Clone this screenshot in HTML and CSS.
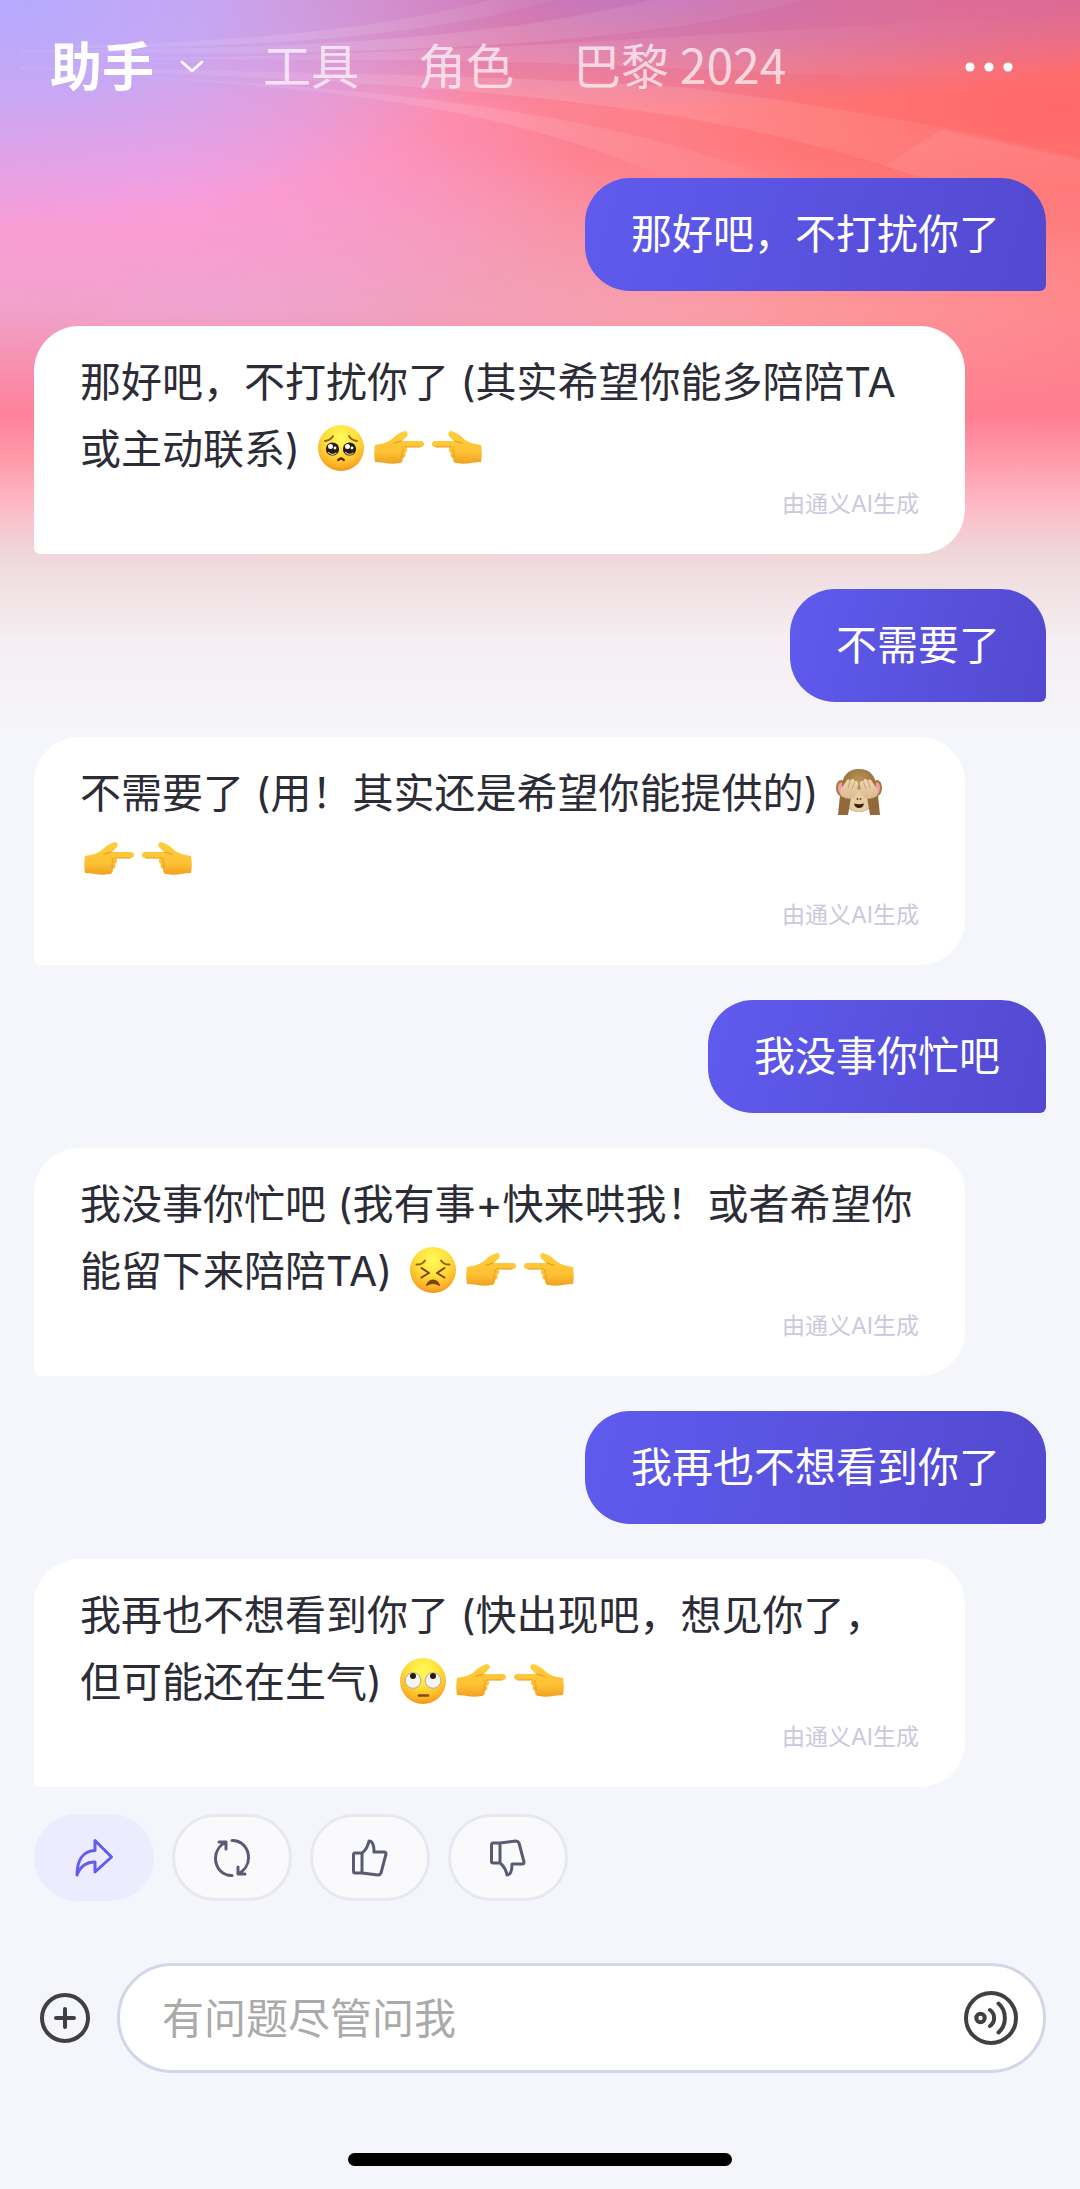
FILE: index.html
```html
<!DOCTYPE html>
<html lang="zh-CN">
<head>
<meta charset="UTF-8">
<meta name="viewport" content="width=device-width, initial-scale=1.0">
<title>助手</title>
<link rel="stylesheet" href="styles.css">
</head>
<body>
    <!-- shared shapes -->
    <svg class="defs" width="0" height="0" aria-hidden="true">
        <defs>
            <radialGradient id="faceFill" cx="50%" cy="28%" r="72%">
                <stop offset="0" stop-color="#fffb5a"/>
                <stop offset="0.5" stop-color="#ffdf3a"/>
                <stop offset="0.85" stop-color="#fcb127"/>
                <stop offset="1" stop-color="#f0951c"/>
            </radialGradient>
            <linearGradient id="handFill" x1="0" y1="0" x2="0" y2="1">
                <stop offset="0" stop-color="#ffce3c"/>
                <stop offset="0.65" stop-color="#fdc134"/>
                <stop offset="1" stop-color="#f0a021"/>
            </linearGradient>
            <radialGradient id="furFill" cx="50%" cy="35%" r="65%">
                <stop offset="0" stop-color="#c09a5c"/>
                <stop offset="1" stop-color="#8a6233"/>
            </radialGradient>
            <linearGradient id="palmFill" x1="0" y1="0" x2="0" y2="1">
                <stop offset="0" stop-color="#f0d6b4"/>
                <stop offset="1" stop-color="#dcb98f"/>
            </linearGradient>
        </defs>
        <symbol id="hand" viewBox="0 0 50 50">
            <path fill="url(#handFill)" d="M1 22C8 21 15 19 19 15C23 11 27 9 31 8C35 9 34 13 32 14L28 18H47C51 18 51 24 47 24H32C34 27 33 29 31 30C32 33 31 34 29 35C29 38 28 40 25 40C17 42 8 39 1 39C0 34 0 27 1 22Z"/>
            <path fill="none" stroke="#e09a1e" stroke-width="1" stroke-linecap="round" d="M31 24H46M28 24C30 26 30 28 28 29M28 30C29 32 28 34 27 34M20 20C22 20 24 19 27 18"/>
        </symbol>
    </svg>

    <svg class="beams" viewBox="0 0 1080 240" preserveAspectRatio="none" aria-hidden="true">
        <defs>
            <linearGradient id="beam" x1="0" y1="0" x2="1" y2="0">
                <stop offset="0" stop-color="#fff" stop-opacity="0.06"/>
                <stop offset="0.5" stop-color="#fff" stop-opacity="0.13"/>
                <stop offset="1" stop-color="#fff" stop-opacity="0.05"/>
            </linearGradient>
            <linearGradient id="beamFade" x1="0" y1="0" x2="1" y2="0">
                <stop offset="0" stop-color="#fff" stop-opacity="0.08"/>
                <stop offset="0.5" stop-color="#fff" stop-opacity="0.1"/>
                <stop offset="1" stop-color="#fff" stop-opacity="0"/>
            </linearGradient>
        </defs>
        <path fill="url(#beam)" d="M60 46C240 42 380 30 490 0H556C440 32 300 48 60 48Z"/>
        <path fill="url(#beam)" d="M20 50C300 50 500 38 650 0H805C640 44 400 58 20 52Z"/>
        <path fill="url(#beamFade)" d="M0 58C340 62 640 38 960 20L1080 22V78C800 80 640 62 420 60Z"/>
        <path fill="url(#beam)" d="M20 67C300 72 520 76 690 88C820 105 950 125 1080 158V225L920 177C760 125 600 84 20 69Z"/>
        <path fill="url(#beam)" d="M140 76C440 92 620 120 770 177H665C530 120 400 92 140 78Z"/>
        <path fill="#fff" fill-opacity="0.08" d="M941 130L1080 160V225L884 166Z"/>
    </svg>

    <header class="top-bar">
        <nav class="tabs">
            <a class="tab active" href="#">助手
                <svg width="24" height="14" viewBox="0 0 24 14"><path d="M2 2L12 11L22 2" fill="none" stroke="#fff" stroke-width="2.6" stroke-linecap="round" stroke-linejoin="round"/></svg>
            </a>
            <a class="tab" href="#">工具</a>
            <a class="tab" href="#">角色</a>
            <a class="tab" href="#">巴黎 2024</a>
        </nav>
        <button class="icon-button" aria-label="更多">
            <svg width="50" height="12" viewBox="0 0 50 12" fill="#fff"><circle cx="6" cy="6" r="4.6"/><circle cx="25" cy="6" r="4.6"/><circle cx="44" cy="6" r="4.6"/></svg>
        </button>
    </header>

    <main class="chat">
        <div class="bubble user">那好吧，不打扰你了</div>
        <div class="bubble bot">
            <p>那好吧，不打扰你了 (其实希望你能多陪陪TA或主动联系) <svg class="emoji" viewBox="0 0 50 50" role="img" aria-label="恳求">
                <circle cx="25" cy="25" r="23" fill="url(#faceFill)"/>
                <circle cx="16.5" cy="26" r="6.6" fill="#2a1a10"/><circle cx="33.5" cy="26" r="6.6" fill="#2a1a10"/>
                <circle cx="14.5" cy="23.5" r="2.5" fill="#fff"/><circle cx="31.5" cy="23.5" r="2.5" fill="#fff"/>
                <circle cx="19" cy="25" r="1.4" fill="#fff"/><circle cx="36" cy="25" r="1.4" fill="#fff"/>
                <path d="M12.5 29.5Q16 33 20 30M29.5 29.5Q33 33 37 30" fill="none" stroke="#bcb3aa" stroke-width="1.3" stroke-linecap="round"/>
                <path d="M9 18Q15 17 17 13M41 18Q35 17 33 13" fill="none" stroke="#9a5a12" stroke-width="1.8" stroke-linecap="round"/>
                <path d="M22.3 37Q25 34 27.7 37" fill="none" stroke="#5a2a08" stroke-width="2.4" stroke-linecap="round"/>
            </svg><svg class="emoji" role="img" aria-label="向右指"><use href="#hand"/></svg><svg class="emoji flip" role="img" aria-label="向左指"><use href="#hand"/></svg></p>
            <small>由通义AI生成</small>
        </div>

        <div class="bubble user">不需要了</div>
        <div class="bubble bot">
            <p>不需要了 (用！其实还是希望你能提供的) <svg class="emoji" viewBox="0 0 50 50" role="img" aria-label="非礼勿视">
                <ellipse cx="7" cy="21" rx="5" ry="8" fill="#a57c46"/><ellipse cx="43" cy="21" rx="5" ry="8" fill="#a57c46"/>
                <ellipse cx="7" cy="21" rx="3" ry="5.5" fill="#f0a0a0"/><ellipse cx="43" cy="21" rx="3" ry="5.5" fill="#f0a0a0"/>
                <path d="M25 2C14 2 8 9 8 20C8 35 14 45 25 45S42 35 42 20C42 9 36 2 25 2Z" fill="url(#furFill)"/>
                <ellipse cx="25" cy="34" rx="12.5" ry="11" fill="#e6cda4"/>
                <path d="M20 36.500Q25 38 30 36.500Q29 41 25 41T20 36.500Z" fill="#3d1c12"/>
                <circle cx="23.5" cy="32" r="0.9" fill="#6b4526"/><circle cx="26.5" cy="32" r="0.9" fill="#6b4526"/>
                <path d="M6 28L17 30L14 48H4ZM44 28L33 30L36 48H46Z" fill="#94693a"/>
                <path d="M7 29C5 25 7 21 9 19L13 13Q15 11 16 14L18 12Q20 11 20.500 14L22 14Q24.500 14 24 18L23 22Q26 22 24 25L19 31Q13 33 7 29Z" fill="url(#palmFill)"/>
                <path d="M43 29C45 25 43 21 41 19L37 13Q35 11 34 14L32 12Q30 11 29.500 14L28 14Q25.500 14 26 18L27 22Q24 22 26 25L31 31Q37 33 43 29Z" fill="url(#palmFill)"/>
                <path d="M16 14L14 21M20.500 15L18 22M34 14L36 21M29.500 15L32 22" stroke="#bd966a" stroke-width="0.8" fill="none"/>
            </svg><svg class="emoji" role="img" aria-label="向右指"><use href="#hand"/></svg><svg class="emoji flip" role="img" aria-label="向左指"><use href="#hand"/></svg></p>
            <small>由通义AI生成</small>
        </div>

        <div class="bubble user">我没事你忙吧</div>
        <div class="bubble bot">
            <p>我没事你忙吧 (我有事+快来哄我！或者希望你能留下来陪陪TA) <svg class="emoji" viewBox="0 0 50 50" role="img" aria-label="难受">
                <circle cx="25" cy="25" r="23" fill="url(#faceFill)"/>
                <path d="M8.5 19.5Q14 20 17 15.5M41.5 19.5Q36 20 33 15.5" fill="none" stroke="#9a5a12" stroke-width="1.9" stroke-linecap="round"/>
                <path d="M13.5 23L21 28L13.5 32.5M36.5 23L29 28L36.5 32.5" fill="none" stroke="#7a430c" stroke-width="2" stroke-linecap="round" stroke-linejoin="round"/>
                <path d="M18.5 40.5Q20 35 25 35T31.5 40.5Q25 36.5 18.5 40.5Z" fill="#7a430c" stroke="#7a430c" stroke-width="1"/>
            </svg><svg class="emoji" role="img" aria-label="向右指"><use href="#hand"/></svg><svg class="emoji flip" role="img" aria-label="向左指"><use href="#hand"/></svg></p>
            <small>由通义AI生成</small>
        </div>

        <div class="bubble user">我再也不想看到你了</div>
        <div class="bubble bot">
            <p>我再也不想看到你了 (快出现吧，想见你了，但可能还在生气) <svg class="emoji" viewBox="0 0 50 50" role="img" aria-label="翻白眼">
                <circle cx="25" cy="25" r="23" fill="url(#faceFill)"/>
                <circle cx="15" cy="24.5" r="7.8" fill="#f4f4f4" stroke="#b8ac94" stroke-width="1"/><circle cx="35" cy="24.5" r="7.8" fill="#f4f4f4" stroke="#b8ac94" stroke-width="1"/>
                <circle cx="15" cy="20" r="3" fill="#30180c"/><circle cx="35" cy="20" r="3" fill="#30180c"/>
                <path d="M21 39.5H30" stroke="#87480c" stroke-width="2.6" stroke-linecap="round"/>
            </svg><svg class="emoji" role="img" aria-label="向右指"><use href="#hand"/></svg><svg class="emoji flip" role="img" aria-label="向左指"><use href="#hand"/></svg></p>
            <small>由通义AI生成</small>
        </div>
    </main>

    <div class="actions">
        <button class="action share" aria-label="分享">
            <svg width="40" height="40" viewBox="0 0 40 40"><path d="M21 2.5L37.5 19L21 34V24C12 24 6 29 3 37C3 22 9 13 21 12.5Z"/></svg>
        </button>
        <button class="action" aria-label="重新生成">
            <svg width="40" height="40" viewBox="0 0 40 40"><path d="M20 2.5C30 2.5 36.5 10 36.5 20C36.5 27 32 33 26 36M26 29V36H33M20 37.5C10 37.5 3.5 30 3.5 20C3.5 13 8 7 14 4M14 11V4H7"/></svg>
        </button>
        <button class="action" aria-label="赞">
            <svg width="40" height="40" viewBox="0 0 40 40"><path d="M5 15H12C16 12 18 8 19 3C23 3 24 7 24 14H34Q36 14 36 16L31 35Q30 37 28 37L12 35H5Q3.5 35 3.5 33V17Q3.5 15 5 15ZM12 15V35"/></svg>
        </button>
        <button class="action" aria-label="踩">
            <svg width="40" height="40" viewBox="0 0 40 40"><path d="M5 25H12C16 28 18 32 19 37C23 37 24 33 24 26H34Q36 26 36 24L31 5Q30 3 28 3L12 5H5Q3.5 5 3.5 7V23Q3.5 25 5 25ZM12 25V5"/></svg>
        </button>
    </div>

    <form class="composer">
        <button class="icon-button" type="button" aria-label="添加">
            <svg width="52" height="52" viewBox="0 0 52 52" fill="none" stroke="#404040" stroke-width="4" stroke-linecap="round"><circle cx="26" cy="26" r="23"/><path d="M26 17V35M17 26H35"/></svg>
        </button>
        <div class="input-box">
            <input type="text" placeholder="有问题尽管问我" aria-label="有问题尽管问我">
            <button class="icon-button" type="button" aria-label="语音">
                <svg width="56" height="56" viewBox="0 0 56 56" fill="none" stroke="#404040" stroke-width="4" stroke-linecap="round"><circle cx="28" cy="28" r="25"/><circle cx="17.5" cy="28" r="4.2"/><path d="M27 20C32.5 24 32.5 32 27 36M35.5 13.5C44 21 44 35 35.5 42.5"/></svg>
            </button>
        </div>
    </form>

    <div class="home-bar"></div>
</body>
</html>
```

FILE: styles.css
```css
* {
    box-sizing: border-box;
}
body {
    margin: 0;
    min-height: 100vh;
    display: flex;
    flex-direction: column;
    position: relative;
    font-family: Inter, "Noto Sans CJK SC", sans-serif;
    color: #2c2c36;
    background:
        linear-gradient(to bottom, rgba(255, 130, 150, 0) 310px, rgba(255, 124, 146, 0.85) 415px, #ff9cac 462px, #ffb8c5 503px, #efd5d9 550px, #f1e2e5 590px, #f5eef2 640px, #f5f6fb 740px),
        radial-gradient(ellipse 520px 230px at 0 0, #b4aaff 0%, rgba(190, 170, 252, 0.85) 40%, rgba(200, 170, 245, 0) 100%),
        radial-gradient(ellipse 480px 75px at 1080px -5px, rgba(218, 104, 150, 0.95) 0%, rgba(218, 104, 150, 0) 100%),
        radial-gradient(ellipse 560px 120px at 660px -10px, rgba(186, 116, 196, 0.95) 0%, rgba(190, 115, 185, 0) 100%),
        radial-gradient(ellipse 360px 140px at 1060px 110px, #ff6868 0%, rgba(255, 107, 107, 0) 100%),
        radial-gradient(ellipse 440px 180px at 140px 170px, #fd9cdd 0%, rgba(253, 156, 221, 0) 100%),
        radial-gradient(ellipse 560px 190px at 220px 310px, #eba6cb 0%, rgba(236, 166, 204, 0) 100%),
        radial-gradient(ellipse 640px 190px at 680px 340px, #fba2a8 0%, rgba(255, 156, 162, 0) 100%),
        linear-gradient(to right, #f79cc4 0%, #fc88a0 40%, #ff7878 75%, #ff7a7c 100%);
    background-color: #f5f6fb;
}
p {
    margin: 0;
}
.defs {
    position: absolute;
}
.beams {
    position: absolute;
    top: 0;
    left: 0;
    width: 100%;
    height: 240px;
    z-index: -1;
    -webkit-mask-image: linear-gradient(to bottom, #000 60%, transparent 95%);
    mask-image: linear-gradient(to bottom, #000 60%, transparent 95%);
}

/* header */
.top-bar {
    display: flex;
    justify-content: space-between;
    align-items: center;
    height: 134px;
    padding: 0 66px 0 50px;
}
.tabs {
    display: flex;
    align-items: center;
    gap: 59px;
    font-family: "Noto Sans CJK SC", sans-serif;
}
.tab {
    padding-bottom: 8px;
    color: rgba(255, 255, 255, 0.7);
    font-size: 48px;
    text-decoration: none;
    white-space: nowrap;
}
.tab.active {
    display: flex;
    align-items: center;
    gap: 26px;
    font-size: 52px;
    font-weight: 700;
    color: #fff;
}
.tab svg {
    margin-top: 8px;
}
.icon-button {
    display: flex;
    padding: 0;
    border: none;
    background: none;
    cursor: pointer;
}

/* messages */
.chat {
    display: flex;
    flex-direction: column;
    gap: 35px;
    padding: 44px 34px 27px;
}
.bubble {
    padding: 23px 46px;
    font-size: 41px;
    line-height: 67px;
}
.user {
    align-self: flex-end;
    color: #fff;
    background: linear-gradient(105deg, #5f5bee, #5349d0);
    border-radius: 45px 45px 6px 45px;
}
.bot {
    align-self: flex-start;
    width: 92%;
    padding-bottom: 29px;
    background: #fff;
    border-radius: 45px 45px 45px 6px;
}
.bot small {
    display: block;
    text-align: right;
    font-size: 23px;
    line-height: 42px;
    color: #c9c9dc;
}
.emoji {
    width: 50px;
    height: 50px;
    margin: 0 4px;
    vertical-align: -9px;
}
.flip {
    transform: scaleX(-1);
}

/* buttons under the last answer */
.actions {
    display: flex;
    gap: 18px;
    padding: 0 34px;
}
.action {
    display: flex;
    justify-content: center;
    align-items: center;
    width: 120px;
    height: 87px;
    padding: 0;
    border: 3px solid #e7e9f1;
    border-radius: 44px;
    background: #fafafd;
    cursor: pointer;
}
.action svg {
    fill: none;
    stroke: #595b73;
    stroke-width: 3;
    stroke-linecap: round;
    stroke-linejoin: round;
}
.share {
    border-color: #edecfe;
    background: #edecfe;
}
.share svg {
    stroke: #635cf0;
}

/* input row */
.composer {
    display: flex;
    align-items: center;
    gap: 26px;
    padding: 62px 34px 0 39px;
}
.input-box {
    flex: 1;
    display: flex;
    align-items: center;
    height: 110px;
    padding: 0 24px 0 42px;
    border: 3px solid #d3d6e9;
    border-radius: 55px;
    background: #fff;
}
.input-box input {
    flex: 1;
    min-width: 0;
    padding: 0;
    border: none;
    outline: none;
    background: none;
    font-family: inherit;
    font-size: 42px;
    color: #2c2c36;
}
.input-box input::placeholder {
    color: #aaa;
}
.home-bar {
    width: 384px;
    height: 13px;
    margin: auto auto 23px;
    border-radius: 7px;
    background: #000;
}
```
